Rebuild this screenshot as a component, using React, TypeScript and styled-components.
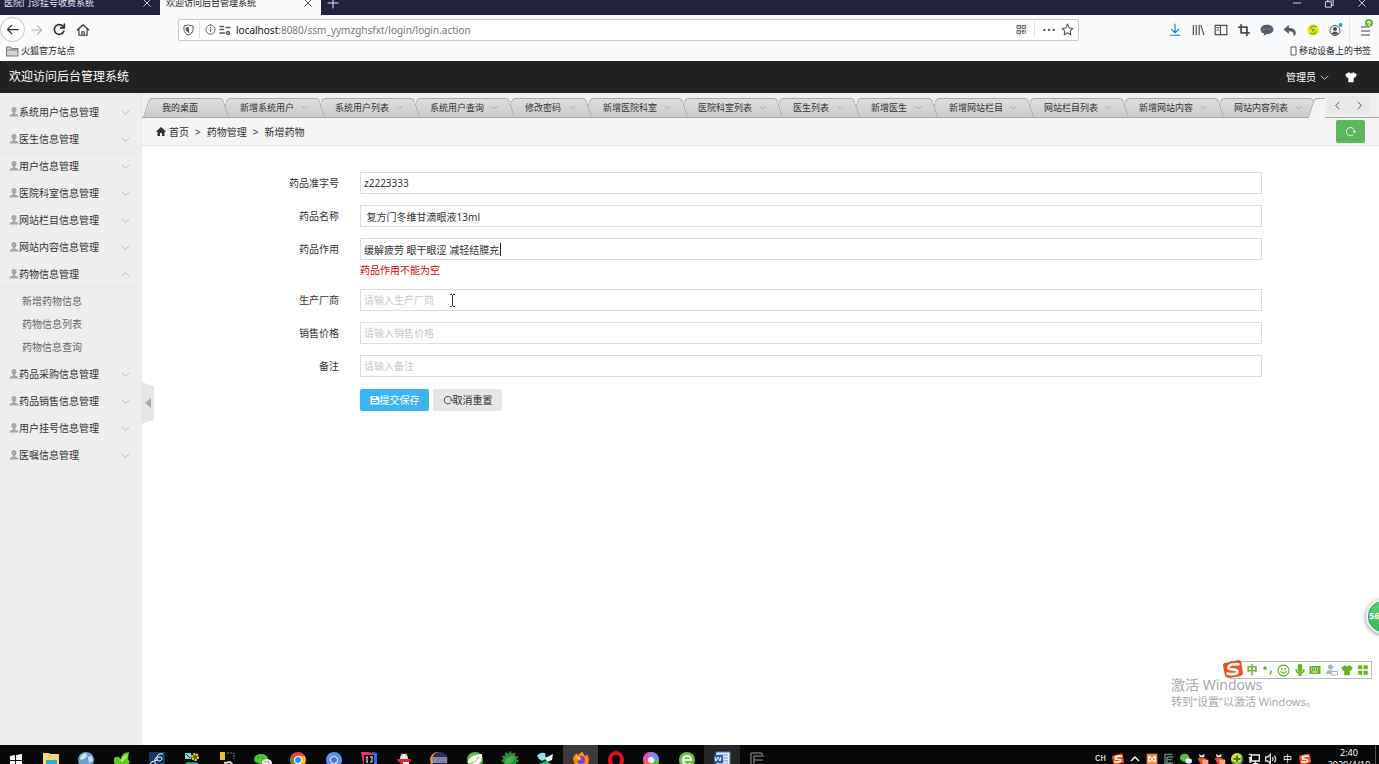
import React from "react";
import styled, { createGlobalStyle } from "styled-components";

const Global = createGlobalStyle`
  * { box-sizing: border-box; }
  html, body { margin: 0; padding: 0; }
  body {
    font-family: "Noto Sans", "Noto Sans CJK SC", sans-serif;
    font-size: 10px;
    line-height: 16px;
    color: #333;
    background: #fff;
    overflow: hidden;
  }
  button, input { font: inherit; color: inherit; margin: 0; }
  button { padding: 0; border: 0; background: none; }
  a { color: inherit; text-decoration: none; }
  ul, ol { list-style: none; margin: 0; padding: 0; }
  svg { display: block; flex: none; }
`;

const Screen = styled.div`
  display: flex;
  flex-direction: column;
  height: 100vh;
  overflow: hidden;
  position: relative;
`;

/* ---------- browser chrome ---------- */

const TitleBar = styled.div`
  display: flex;
  align-items: flex-end;
  height: 15px;
  flex: none;
  overflow: hidden;
  background: #20223f;
`;

const BrowserTab = styled.div<{ $active?: boolean }>`
  display: flex;
  align-items: center;
  justify-content: space-between;
  width: ${(p) => (p.$active ? 161 : 160)}px;
  height: 24px;
  padding: 0 8px 0 ${(p) => (p.$active ? 6 : 4)}px;
  font-size: 9px;
  color: ${(p) => (p.$active ? "#222" : "#e8e8f0")};
  background: ${(p) => (p.$active ? "#f9fafb" : "transparent")};
`;

const TabLabel = styled.span`
  white-space: nowrap;
`;

const GlyphButton = styled.button<{ $color?: string }>`
  display: flex;
  align-items: center;
  justify-content: center;
  color: ${(p) => p.$color || "inherit"};
`;

const NewTab = styled(GlyphButton)`
  width: 24px;
  height: 24px;
  color: #e8e8f0;
`;

const WindowButtons = styled.div`
  display: flex;
  gap: 22px;
  margin-left: auto;
  padding-right: 12px;
  height: 24px;
  align-items: center;
  color: #e8e8f0;
`;

const NavBar = styled.div`
  display: flex;
  align-items: center;
  height: 29px;
  flex: none;
  background: #f9fafb;
`;

const NavGroup = styled.div`
  display: flex;
  align-items: center;
  width: 178px;
  flex: none;
  color: #333;
`;

const BackButton = styled(GlyphButton)`
  width: 25px;
  height: 25px;
  border: 1px solid #c4c4c6;
  border-radius: 50%;
  background: #fff;
`;

const NavButton = styled(GlyphButton)`
  width: 23px;
  height: 24px;
`;

const AddressBar = styled.div`
  display: flex;
  align-items: center;
  gap: 3px;
  flex: 1 1 auto;
  max-width: 901px;
  height: 22px;
  padding: 0 4px 0 4px;
  border: 1px solid #ccc;
  border-radius: 2px;
  background: #fff;
  color: #555;
`;

const AddressText = styled.div`
  flex: 1;
  padding-left: 2px;
  font-size: 10px;
  color: #777;
  white-space: nowrap;
`;

const Host = styled.span`
  color: #111;
`;

const Divider = styled.span`
  width: 1px;
  height: 16px;
  margin: 0 2px;
  background: #e0e0e0;
`;

const AddressActions = styled.div`
  display: flex;
  align-items: center;
  gap: 5px;
`;

const ToolIcons = styled.div`
  display: flex;
  align-items: center;
  gap: 9px;
  margin-left: auto;
  padding-right: 5px;
  color: #4a4a4f;
`;

const AppMenu = styled(GlyphButton)`
  height: 24px;
  margin-left: -3px;
  padding-left: 10px;
  border-left: 1px solid #e4e4e4;
`;

const Bookmarks = styled.div`
  display: flex;
  align-items: center;
  justify-content: space-between;
  height: 17px;
  flex: none;
  padding: 0 8px 3px 6px;
  background: #f9fafb;
  font-size: 9px;
  color: #222;
`;

const Bookmark = styled.a`
  display: flex;
  align-items: center;
  gap: 2px;
`;

/* ---------- application ---------- */

const AppHeader = styled.header`
  display: flex;
  align-items: center;
  justify-content: space-between;
  height: 32px;
  flex: none;
  padding: 0 22px 0 9px;
  background: #222;
  color: #fff;
`;

const AppTitle = styled.h1`
  margin: 0;
  font-size: 12px;
  font-weight: 400;
`;

const HeaderRight = styled.div`
  display: flex;
  align-items: center;
  gap: 16px;
`;

const UserMenu = styled.button`
  display: flex;
  align-items: center;
  gap: 4px;
`;

const Body = styled.div`
  display: flex;
  flex: 1;
  min-height: 0;
`;

const Sidebar = styled.nav`
  position: relative;
  width: 142px;
  flex: none;
  padding-top: 6px;
  background: #eeeeee;
  border-right: 1px solid #e6e6e6;
`;

const MenuButton = styled.button`
  display: flex;
  align-items: center;
  width: 138px;
  height: 27px;
  padding: 0 8px 0 9px;
  border-bottom: 1px solid #e8e8e8;
  text-align: left;
`;

const MenuText = styled.span`
  flex: 1;
  white-space: nowrap;
`;

const SubMenu = styled.ul`
  padding: 2px 0 2px 22px;
`;

const SubItem = styled.li`
  height: 23px;
  line-height: 23px;
  color: #666;
`;

const CollapseHandle = styled.button`
  position: absolute;
  left: 141px;
  top: 289px;
  width: 13px;
  height: 42px;
  display: flex;
  align-items: center;
  justify-content: center;
  background: #e6e6e6;
  color: #aaa;
  clip-path: polygon(0 0, 100% 10%, 100% 90%, 0 100%);
`;

const Main = styled.main`
  display: flex;
  flex-direction: column;
  flex: 1;
  min-width: 0;
  background: #fff;
`;

const TabBar = styled.div`
  display: flex;
  align-items: flex-end;
  height: 25px;
  flex: none;
  background: #efefef;
  border-bottom: 1px solid #a8a8a8;
`;

const TabStrip = styled.ul`
  position: relative;
  display: flex;
  flex: 1;
  min-width: 0;
  height: 20px;
  margin-bottom: -1px;
  overflow: hidden;
  padding-left: 4px;
`;

const PageTab = styled.li<{ $short?: boolean; $active?: boolean; $order: number }>`
  position: relative;
  z-index: ${(p) => p.$order};
  isolation: isolate;
  display: flex;
  align-items: center;
  justify-content: space-between;
  flex: none;
  width: ${(p) => (p.$short ? 78 : 95)}px;
  height: ${(p) => (p.$active ? 20 : 19)}px;
  padding: 0 11px 0 16px;
  font-size: 9px;
  white-space: nowrap;

  &::before,
  &::after {
    content: "";
    position: absolute;
    z-index: -1;
    top: 0;
    bottom: 0;
    border: 1px solid #a8a8a8;
    border-bottom: 0;
    background: ${(p) => (p.$active ? "#f3f3f3" : "linear-gradient(#dedede, #cbcbcb)")};
  }
  &::before {
    left: ${(p) => (p.$active ? -2 : 0)}px;
    right: 50%;
    border-right: 0;
    border-top-left-radius: 4px;
    transform: skewX(-18deg);
  }
  &::after {
    left: 30%;
    right: -2px;
    border-left: 0;
    border-top-right-radius: 4px;
    transform: skewX(18deg);
  }
`;

const TabPager = styled.div`
  display: flex;
  align-items: center;
  flex: none;
  width: 54px;
  height: 24px;
  padding: 0 9px 0 2px;
`;

const PagerButton = styled(GlyphButton)`
  flex: 1;
  height: 18px;
  background: #e8e8e8;
`;

const Crumbs = styled.div`
  display: flex;
  align-items: center;
  justify-content: space-between;
  height: 28px;
  flex: none;
  padding: 0 14px;
  background: #f4f4f4;
  border-bottom: 1px solid #e6e6e6;
`;

const CrumbList = styled.ol`
  display: flex;
  align-items: center;
  gap: 6px;
`;

const Crumb = styled.li`
  display: flex;
  align-items: center;
  gap: 3px;
`;

const RefreshButton = styled(GlyphButton)`
  width: 29px;
  height: 23px;
  border-radius: 2px;
  background: #5cb85c;
  color: #fff;
`;

const Form = styled.form`
  display: flex;
  flex-direction: column;
  gap: 11px;
  padding: 26px 117px 0 0;
`;

const Field = styled.div`
  display: grid;
  grid-template-columns: 197px 1fr;
  column-gap: 21px;
`;

const Label = styled.label`
  line-height: 22px;
  text-align: right;
`;

const TextBox = styled.input`
  width: 100%;
  height: 22px;
  padding: 0 3px;
  border: 1px solid #ddd;
  border-radius: 0;
  outline: none;
  background: #fff;
  &::placeholder { color: #c8c8c8; opacity: 1; }
`;

const ErrorText = styled.p`
  grid-column: 2;
  margin: 2px 0 0;
  color: #e60000;
`;

const Actions = styled.div`
  display: flex;
  gap: 4px;
  padding: 1px 0 0 218px;
`;

const ActionButton = styled.button<{ $primary?: boolean }>`
  display: flex;
  align-items: center;
  justify-content: center;
  width: 69px;
  height: 22px;
  border-radius: 2px;
  background: ${(p) => (p.$primary ? "#3bb4f2" : "#e6e6e6")};
  color: ${(p) => (p.$primary ? "#fff" : "#333")};
`;

/* ---------- desktop overlays ---------- */

const MouseCursor = styled.div`
  position: absolute;
  left: 449px;
  top: 294px;
`;

const TextCaret = styled.div`
  position: absolute;
  left: 500px;
  top: 243px;
  width: 1px;
  height: 13px;
  background: #222;
`;

const Watermark = styled.div`
  position: absolute;
  right: 66px;
  bottom: 54px;
  width: 142px;
  color: #a8a8a8;
  white-space: nowrap;
`;

const WatermarkTitle = styled.div`
  font-size: 14px;
  line-height: 18px;
`;

const WatermarkText = styled.div`
  font-size: 11px;
  line-height: 16px;
`;

const ImeBar = styled.div`
  position: absolute;
  right: 7px;
  bottom: 85px;
  display: flex;
  align-items: center;
  width: 142px;
  height: 18px;
  padding: 0 0 0 13px;
  border: 1px solid #b4b9c4;
  background: #fff;
  color: #6ab023;
`;

const ImeKey = styled(GlyphButton)`
  flex: 1;
  font-size: 11px;
  font-weight: 700;
`;

const ImeLogo = styled.div`
  position: absolute;
  left: -8px;
  top: -3px;
`;

const SpeedBall = styled.div`
  position: absolute;
  right: -22px;
  bottom: 130px;
  width: 35px;
  height: 35px;
  padding-left: 1px;
  border: 2px solid #e9eef0;
  border-radius: 50%;
  background: linear-gradient(#5fd37c, #35b957);
  box-shadow: 0 1px 4px rgba(0, 0, 0, 0.5), inset 0 0 0 1px #3f9a5a;
  color: #fff;
  font-size: 9px;
  font-weight: 700;
  line-height: 29px;
`;

const Taskbar = styled.footer`
  display: flex;
  height: 19px;
  flex: none;
  overflow: hidden;
  background: #070808;
  color: #fff;
`;

const TaskList = styled.div`
  display: grid;
  grid-auto-flow: column;
  grid-auto-columns: 1fr;
  flex: 0 1 777px;
  margin-left: -2px;
`;

const TaskButton = styled.button<{ $open?: "front" | "back" }>`
  display: flex;
  justify-content: center;
  height: 30px;
  padding-top: 6px;
  background: ${(p) => (p.$open === "front" ? "#3a3a3c" : p.$open === "back" ? "#232527" : "transparent")};
`;

const Tray = styled.div`
  display: flex;
  align-items: flex-start;
  margin-left: auto;
  font-size: 9px;
  line-height: 12px;
`;

const TrayItem = styled(GlyphButton)`
  width: 17px;
  height: 12px;
  margin-top: 8px;
`;

const InputLocale = styled(TrayItem)`
  font-family: "Liberation Mono", monospace;
`;

const Clock = styled.div`
  width: 52px;
  margin: 2px 0 0 10px;
  text-align: center;
`;

const ShowDesktop = styled.div`
  width: 4px;
  height: 24px;
  border-left: 1px solid #555;
`;

/* ---------- icons ---------- */

type StrokeProps = { size?: number; d: string; w?: number; color?: string; fill?: string };
const Stroke = ({ size = 12, d, w = 2, color = "currentColor", fill = "none" }: StrokeProps) => (
  <svg width={size} height={size} viewBox="0 0 24 24" fill={fill} stroke={color} strokeWidth={w} strokeLinecap="round" strokeLinejoin="round" aria-hidden="true">
    <path d={d} />
  </svg>
);

const CROSS = "M4 4 20 20M20 4 4 20";
const DOWN = "M3 8 12 17 21 8";
const UP = "M3 16 12 7 21 16";
const SHIRT = "M8 3 1 7l3 6 3-1v10h10V12l3 1 3-6-7-4c-1 3-7 3-8 0z";

const PersonIcon = () => (
  <svg width="10" height="10" viewBox="0 0 20 20" fill="#a3a8ac" aria-hidden="true">
    <path d="M10 0c-4 0-5 2-5 5 0 3 1 5 3 6v2L3 15c-1 1-2 2-2 4h18c0-2-1-3-2-4l-5-2v-2c2-1 3-3 3-6 0-3-1-5-5-5z" />
  </svg>
);

const RotateIcon = ({ size = 11 }: { size?: number }) => (
  <svg width={size} height={size} viewBox="0 0 24 24" fill="none" stroke="currentColor" strokeWidth="2" aria-hidden="true">
    <path d="M18 19A9 9 0 1 1 21 12M17 11l4 4 3-4" />
  </svg>
);

const SogouLogo = ({ size }: { size: number }) => (
  <svg width={size} height={size} viewBox="0 0 22 22" aria-hidden="true">
    <path d="M3 4 17 1q2 0 3 2l2 13q0 2-3 3L6 21q-3 0-4-3L0 7q0-3 3-3z" fill="#f0501e" />
    <path d="M17 6Q7 5 6 9c-1 4 10 1 10 5 0 3-6 3-11 2" fill="none" stroke="#fff" strokeWidth="3" strokeLinecap="round" />
  </svg>
);

const Art = ({ size = 18, children }: { size?: number; children: React.ReactNode }) => (
  <svg width={size} height={size} viewBox="0 0 18 18" aria-hidden="true">{children}</svg>
);

const penguin = (
  <>
    <path d="M3 1l4 3 4-3v5H4z" fill="#f3eee0" />
    <path d="M1 8q8-4 13 1l-2 7H5z" fill="#e2512f" />
    <path d="M8 10h9v7H8z" fill="#f4a489" />
  </>
);

/* ---------- data ---------- */

const menuBefore = ["系统用户信息管理", "医生信息管理", "用户信息管理", "医院科室信息管理", "网站栏目信息管理", "网站内容信息管理"];
const subMenu = ["新增药物信息", "药物信息列表", "药物信息查询"];
const menuAfter = ["药品采购信息管理", "药品销售信息管理", "用户挂号信息管理", "医嘱信息管理"];
const pageTabs = ["我的桌面", "新增系统用户", "系统用户列表", "系统用户查询", "修改密码", "新增医院科室", "医院科室列表", "医生列表", "新增医生", "新增网站栏目", "网站栏目列表", "新增网站内容", "网站内容列表"];

const fields: { id: string; label: string; value?: string; hint?: string; error?: string }[] = [
  { id: "code", label: "药品准字号", value: "z2223333" },
  { id: "name", label: "药品名称", value: " 复方门冬维甘滴眼液13ml" },
  { id: "effect", label: "药品作用", value: "缓解疲劳 眼干眼涩 减轻结膜充", error: "药品作用不能为空" },
  { id: "maker", label: "生产厂商", hint: "请输入生产厂商" },
  { id: "price", label: "销售价格", hint: "请输入销售价格" },
  { id: "remark", label: "备注", hint: "请输入备注" },
];

const MenuRow = ({ text, open }: { text: string; open?: boolean }) => (
  <MenuButton type="button" aria-expanded={!!open}>
    <PersonIcon />
    <MenuText>{text}</MenuText>
    <Stroke size={9} d={open ? UP : DOWN} color="#aaa" />
  </MenuButton>
);

const tasks: { name: string; open?: "front" | "back"; art: React.ReactNode }[] = [
  { name: "开始", art: <path d="M3 5l5-1v5H3zM9 4l6-1v6H9zM3 10h5v5l-5-1zM9 10h6v6l-6-1z" fill="#fff" /> },
  { name: "文件", art: <><path d="M1 2h6l1 1h9v14H1z" fill="#f7d774" /><path d="M4 9h11v8h-3v-4H7v4H4z" fill="#35a7e0" /></> },
  { name: "浏览", art: <><circle cx="9" cy="9" r="8" fill="#6a9fd8" /><path d="M3 7q2-5 6-5l1 3-3 3-3 1zM11 6l4-1 1 5-4 2z" fill="#cfe3f6" /></> },
  { name: "下载", art: <><path d="M1 7q4-3 7 1 0-6 8-7l-1 7 2 3q-5 7-12 4L1 12z" fill="#5fce1f" /><path d="M8 9q3-5 7-6-2 6-7 8z" fill="#b5f06a" /></> },
  { name: "数据", art: <><path d="M1 1h16v17H1z" fill="#143b63" /><path d="M15 3q-5-1-6 3t3 4q5-4-1-4-5 0-4 5t-5 3q0-4 8-5" fill="none" stroke="#fff" /></> },
  { name: "主机", art: <><path d="M2 2h6v6H2z" fill="#7fd7e8" /><path d="M3 3l4 4" stroke="#222" /><circle cx="12" cy="6" r="3" fill="#6a5c12" stroke="#f5d73a" strokeWidth="2" strokeDasharray="2 1" /><path d="M4 11h10l3 3v4H1v-4z" fill="#0d9b58" /></> },
  { name: "工具", art: <><path d="M1 1h5v8H1z" fill="#f1b92b" /><path d="M8 2h7v6" fill="none" stroke="#8a8046" strokeDasharray="2 1" /><path d="M5 12l6-1 6 6" fill="none" stroke="#ddd" strokeWidth="2" /></> },
  { name: "微信", art: <><ellipse cx="7" cy="8" rx="7" ry="5" fill="#54c440" /><ellipse cx="13" cy="12" rx="5" ry="4" fill="#eee" /><path d="M4 7h1M8 7h1M11 11h1M14 11h1" stroke="#333" /></> },
  { name: "谷歌", art: <><circle cx="9" cy="9" r="8" fill="#e5483b" /><path d="M2 5l6 12Q-1 15 2 5z" fill="#2ba24c" /><path d="M9 5h7q3 9-7 12z" fill="#fbc116" /><circle cx="9" cy="9" r="4" fill="#fff" /><circle cx="9" cy="9" r="3" fill="#4285f4" /></> },
  { name: "内核", art: <><circle cx="9" cy="9" r="8" fill="#5f92ea" /><circle cx="9" cy="9" r="4" fill="#dbe7fb" /><circle cx="9" cy="9" r="3" fill="#4778d6" /></> },
  { name: "开发", art: <><path d="M1 1h8l8 3v14H4z" fill="#ef3364" /><path d="M12 1l5 1v16h-6z" fill="#2d6ff0" /><path d="M4 4h10v12H4z" fill="#000" /><path d="M6 6h2M7 6v5M6 11h2M10 6h3M12 6v5h-2" stroke="#fff" fill="none" /></> },
  { name: "终端", art: <><path d="M6 3h6l1 5H5z" fill="#eee" /><path d="M7 2v3M11 2v3" stroke="#a07a33" /><path d="M2 8h14l-1 3H8v4H5v-4H3z" fill="#e32626" /><path d="M8 11h6v6H8z" fill="#eee" /></> },
  { name: "集成", art: <><circle cx="8" cy="9" r="8" fill="#f29423" /><circle cx="10" cy="9" r="8" fill="#2e2a5b" /><path d="M2 7h15M2 9h15M2 11h15" stroke="#dcdcf0" /></> },
  { name: "叶一", art: <><circle cx="9" cy="9" r="8" fill="#68b643" /><path d="M2 12Q2 4 16 3q0 12-8 11-3 0-6-2z" fill="#fff" /><path d="M3 13q6-1 10-7" stroke="#68b643" fill="none" /></> },
  { name: "叶二", art: <><circle cx="9" cy="9" r="7" fill="#2d8b3e" stroke="#2d8b3e" strokeWidth="3" strokeDasharray="2 2" /><path d="M4 12q0-7 10-7-1 8-8 8z" fill="#4da64c" /></> },
  { name: "网络", art: <><path d="M1 5q3-4 8-3l1 6-4 2q-3-1-5-5z" fill="#8fe3f0" /><path d="M9 7l8-4-1 6-5 2z" fill="#e3f8fa" /><path d="M3 13l6-3 7 3-2 5H4z" fill="#1fb573" /></> },
  { name: "火狐", open: "front", art: <><path d="M1 8q1-4 4-6l1 3q2-4 5-4 0 3 3 4l1-2q3 5 1 10t-7 5-8-10z" fill="#ff8a1f" /><circle cx="9" cy="9" r="4" fill="#7542c8" /><path d="M4 5q5 0 5 3l-3 2z" fill="#ffc928" /></> },
  { name: "欧朋", art: <ellipse cx="9" cy="9" rx="6" ry="7" fill="none" stroke="#d81522" strokeWidth="4" /> },
  { name: "相册", art: <><circle cx="9" cy="9" r="8" fill="#ff5c58" /><path d="M9 9H1a8 8 0 0 1 8-8z" fill="#e056c8" /><path d="M9 9V1a8 8 0 0 1 8 8z" fill="#6d8cf5" /><path d="M9 9h8a8 8 0 0 1-8 8z" fill="#58c94b" /><circle cx="9" cy="9" r="3" fill="#fff" /></> },
  { name: "安全", art: <><circle cx="9" cy="9" r="8" fill="#67c43c" /><path d="M5 9h8q0-4-4-4t-4 4 4 5l4-1" stroke="#fff" strokeWidth="2" fill="none" /></> },
  { name: "文档", open: "back", art: <><path d="M3 1h14v16H3z" fill="#e5eefb" stroke="#4475bd" /><path d="M6 4h9M6 7h9M6 10h9M6 13h9" stroke="#6a96d3" /><path d="M1 4h9v8H1z" fill="#2a5cab" /><path d="M2 6l1 4 2-4 2 4 1-4" stroke="#fff" fill="none" /></> },
  { name: "录制", art: <path d="M14 2H3v14h5M6 5h10M6 9h9M6 5v9h7M14 2v2" stroke="#999" fill="none" /> },
];

const tray: { name: string; art: React.ReactNode }[] = [
  { name: "展开", art: <path d="M3 12l6-6 6 6" fill="none" stroke="#fff" strokeWidth="2" /> },
  { name: "控制", art: <><path d="M1 1h16v16H1z" fill="#f08436" /><path d="M4 5q3 0 5 4 2 4 5 4V5q-3 0-5 4-2 4-5 4z" fill="none" stroke="#fff" strokeWidth="2" /></> },
  { name: "录屏", art: <path d="M14 2H3v14h4M6 6h9M6 10h8M6 6v9h9" stroke="#6e8f7b" strokeWidth="2" fill="none" /> },
  { name: "微信消息", art: <><ellipse cx="7" cy="7" rx="7" ry="6" fill="#54c440" /><ellipse cx="13" cy="12" rx="5" ry="4" fill="#eee" /></> },
  { name: "消息一", art: penguin },
  { name: "消息二", art: penguin },
  { name: "防护", art: <><circle cx="9" cy="9" r="9" fill="#e8d82a" /><path d="M2 13a8 8 0 0 0 14-8" fill="none" stroke="#3f9b37" strokeWidth="3" /><path d="M9 4v10M4 9h10" stroke="#2e7d32" strokeWidth="3" /></> },
  { name: "联网", art: <path d="M5 3h12v9H5zM11 12v4M8 16h7M1 2h4M1 7h3M3 7v8" fill="none" stroke="#eee" strokeWidth="2" /> },
  { name: "音量", art: <path d="M1 6h3l4-4v14l-4-4H1zM11 6q2 3 0 6M14 4q4 5 0 10" fill="none" stroke="#ddd" strokeWidth="2" /> },
];

const GRID_APPS = "M3 3h7v7H3zM14 3h7v7h-7zM3 14h7v7H3zM14 14h7v7h-7z";

export default function App() {
  return (
    <Screen>
      <Global />
      <TitleBar>
        <BrowserTab>
          <TabLabel>医院门诊挂号收费系统</TabLabel>
          <GlyphButton aria-label="关闭标签"><Stroke size={10} d={CROSS} /></GlyphButton>
        </BrowserTab>
        <BrowserTab $active>
          <TabLabel>欢迎访问后台管理系统</TabLabel>
          <GlyphButton aria-label="关闭标签"><Stroke size={10} d={CROSS} /></GlyphButton>
        </BrowserTab>
        <NewTab aria-label="新标签"><Stroke size={12} d="M12 2v20M2 12h20" /></NewTab>
        <WindowButtons>
          <GlyphButton aria-label="最小化"><Stroke size={10} d="M3 12h18" /></GlyphButton>
          <GlyphButton aria-label="还原"><Stroke size={11} d="M4 8h12v12H4zM8 8V4h12v12h-4" /></GlyphButton>
          <GlyphButton aria-label="关闭"><Stroke size={10} d={CROSS} /></GlyphButton>
        </WindowButtons>
      </TitleBar>

      <NavBar>
        <NavGroup>
          <BackButton aria-label="后退"><Stroke size={15} d="M21 12H4M11 5l-7 7 7 7" /></BackButton>
          <NavButton aria-label="前进" $color="#b5b5b8"><Stroke size={14} d="M3 12h17M13 5l7 7-7 7" /></NavButton>
          <NavButton aria-label="刷新"><Stroke size={13} d="M20 15a9 9 0 1 1-1-8M21 2v7h-7" w={3} /></NavButton>
          <NavButton aria-label="主页"><Stroke size={14} d="M2 12 12 3l10 9M5 11v10h14V11M10 21v-6h4v6" /></NavButton>
        </NavGroup>
        <AddressBar>
          <svg width="11" height="12" viewBox="0 0 22 24" fill="none" stroke="currentColor" strokeWidth="2" aria-hidden="true">
            <path d="M11 2 20 4v7c0 6-4 9-9 11-5-2-9-5-9-11V4z" /><path d="M11 7v10c-3-2-5-4-5-9z" fill="currentColor" />
          </svg>
          <Divider />
          <Stroke size={11} d="M12 2a10 10 0 1 0 .1 0zM12 11v6M12 7v.5" />
          <Stroke size={12} w={3} d="M2 5h7M2 11h7M14 7h8M2 18h9M18 15a3 3 0 1 0 .1 0" />
          <AddressText><Host>localhost</Host>:8080/ssm_yymzghsfxt/login/login.action</AddressText>
          <AddressActions>
            <Stroke size={11} d="M3 3h7v7H3zM14 3h7v7h-7zM3 14h7v7H3zM14 14h3v3h-3zM20 14v3M14 20h3M20 20h1M6 6h1M17 6h1M6 17h1" />
            <Divider />
            <Stroke size={14} w={4} d="M4 12h.1M12 12h.1M20 12h.1" />
            <Stroke size={13} d="M12 2l3 7 7 1-5 5 1 7-6-4-6 4 1-7-5-5 7-1z" />
          </AddressActions>
        </AddressBar>
        <ToolIcons>
          <Stroke size={14} d="M12 2v14M6 11l6 6 6-6M4 21h16" color="#0a7be8" />
          <Stroke size={14} d="M4 4v16M9 4v16M14 4v16M17 4l5 16" />
          <Stroke size={14} d="M2 4h20v16H2zM11 4v16M5 8h3M5 12h3" />
          <Stroke size={14} w={3} d="M7 3v14h14M3 7h14v14" />
          <svg width="14" height="14" viewBox="0 0 24 24" fill="#56606a" aria-hidden="true"><path d="M12 3c6 0 11 3 11 8s-5 8-11 8l-6 3 1-4c-4-1-6-4-6-7 0-5 5-8 11-8z" /><path d="M7 11h.1M12 11h.1M17 11h.1" stroke="#aab" strokeWidth="2" strokeLinecap="round" /></svg>
          <svg width="14" height="14" viewBox="0 0 24 24" fill="#56606a" aria-hidden="true"><path d="M10 3v5c8 0 12 5 12 9 0 3-2 5-4 5 1-6-2-8-8-8v5l-9-8z" /></svg>
          <svg width="14" height="14" viewBox="0 0 24 24" aria-hidden="true"><circle cx="12" cy="12" r="10" fill="#f2e713" /><path d="M7 10a6 6 0 0 1 10-3M18 14a6 6 0 0 1-10 3M12 9v7M9 12h7" fill="none" stroke="#5ba338" strokeWidth="2" /></svg>
          <svg width="14" height="16" viewBox="0 0 28 32" aria-hidden="true"><circle cx="12" cy="17" r="10" fill="none" stroke="#4a4a4f" strokeWidth="2" /><circle cx="12" cy="14" r="4" fill="#4a4a4f" /><path d="M5 23q7-8 14 0-7 5-14 0z" fill="#4a4a4f" /><circle cx="23" cy="6" r="4" fill="#16a5f2" /></svg>
          <AppMenu aria-label="菜单">
            <svg width="14" height="24" viewBox="0 0 14 24" aria-hidden="true"><path d="M1 9h8M1 13h9M1 17h9" stroke="#444" strokeWidth="1" /><circle cx="9" cy="5" r="4" fill="#62b82f" /><path d="M9 8V3M7 5l2-2 2 2" stroke="#fff" fill="none" /></svg>
          </AppMenu>
        </ToolIcons>
      </NavBar>

      <Bookmarks>
        <Bookmark href="#official">
          <svg width="13" height="11" viewBox="0 0 26 22" aria-hidden="true"><path d="M1 2h8l2 3h13v15H1zM1 8h23" fill="#d4d4d4" stroke="#777" strokeWidth="2" /></svg>
          火狐官方站点
        </Bookmark>
        <Bookmark href="#mobile">
          <svg width="7" height="10" viewBox="0 0 7 10" aria-hidden="true"><path d="M1 1h5v8H1z" fill="#fff" stroke="#555" /></svg>
          移动设备上的书签
        </Bookmark>
      </Bookmarks>

      <AppHeader>
        <AppTitle>欢迎访问后台管理系统</AppTitle>
        <HeaderRight>
          <UserMenu type="button">管理员<Stroke size={9} d={DOWN} /></UserMenu>
          <GlyphButton aria-label="换肤"><Stroke size={12} d={SHIRT} fill="currentColor" w={1} /></GlyphButton>
        </HeaderRight>
      </AppHeader>

      <Body>
        <Sidebar>
          {menuBefore.map((t) => <MenuRow key={t} text={t} />)}
          <MenuRow text="药物信息管理" open />
          <SubMenu>
            {subMenu.map((t) => <SubItem key={t}><a href="#drug">{t}</a></SubItem>)}
          </SubMenu>
          {menuAfter.map((t) => <MenuRow key={t} text={t} />)}
          <CollapseHandle aria-label="收起菜单">
            <svg width="6" height="10" viewBox="0 0 6 10" fill="currentColor" aria-hidden="true"><path d="M6 0v10L0 5z" /></svg>
          </CollapseHandle>
        </Sidebar>

        <Main>
          <TabBar>
            <TabStrip>
              {pageTabs.map((t, i) => (
                <PageTab key={t} $short={t.length === 4} $order={20 - i}>
                  {t}
                  {i > 0 && <GlyphButton $color="#a4a4a4" aria-label="关闭"><Stroke size={7} d={DOWN} w={3} /></GlyphButton>}
                </PageTab>
              ))}
              <PageTab $active $order={30} />
            </TabStrip>
            <TabPager>
              <PagerButton aria-label="向左"><Stroke size={9} d="M16 3 7 12l9 9" /></PagerButton>
              <PagerButton aria-label="向右"><Stroke size={9} d="M8 3l9 9-9 9" /></PagerButton>
            </TabPager>
          </TabBar>
          <Crumbs>
            <CrumbList>
              <Crumb>
                <svg width="10" height="9" viewBox="0 0 20 18" fill="#333" aria-hidden="true"><path d="M10 0l10 9-2 1-1-1v9h-5v-6H8v6H3V9l-1 1-2-1z" /></svg>
                <a href="#home">首页</a>
              </Crumb>
              <li>&gt;</li>
              <li>药物管理</li>
              <li>&gt;</li>
              <li>新增药物</li>
            </CrumbList>
            <RefreshButton aria-label="刷新页面"><RotateIcon /></RefreshButton>
          </Crumbs>
          <Form onSubmit={(e) => e.preventDefault()}>
            {fields.map((f) => (
              <Field key={f.id}>
                <Label htmlFor={f.id}>{f.label}</Label>
                <TextBox id={f.id} type="text" defaultValue={f.value} placeholder={f.hint} />
                {f.error && <ErrorText>{f.error}</ErrorText>}
              </Field>
            ))}
            <Actions>
              <ActionButton $primary type="submit">
                <svg width="10" height="10" viewBox="0 0 20 20" aria-hidden="true"><path d="M1 2h14l4 4v13H1z" fill="#fff" /><path d="M5 4h7v3H5zM4 10h12v6H4z" fill="#3bb4f2" /><path d="M5 13h8" stroke="#fff" strokeWidth="2" /></svg>
                提交保存
              </ActionButton>
              <ActionButton type="reset"><RotateIcon size={10} />取消重置</ActionButton>
            </Actions>
          </Form>
        </Main>
      </Body>

      <Taskbar>
        <TaskList>
          {tasks.map((t) => (
            <TaskButton key={t.name} $open={t.open} aria-label={t.name}><Art>{t.art}</Art></TaskButton>
          ))}
        </TaskList>
        <Tray>
          <InputLocale>CH</InputLocale>
          <TrayItem aria-label="搜狗"><SogouLogo size={12} /></TrayItem>
          {tray.map((t) => (
            <TrayItem key={t.name} aria-label={t.name}><Art size={12}>{t.art}</Art></TrayItem>
          ))}
          <TrayItem>中</TrayItem>
          <TrayItem aria-label="输入法"><SogouLogo size={12} /></TrayItem>
          <Clock>2:40<br />2020/4/19</Clock>
          <ShowDesktop />
        </Tray>
      </Taskbar>

      <TextCaret />
      <MouseCursor>
        <svg width="7" height="13" viewBox="0 0 7 13" stroke="#333" fill="none" aria-hidden="true"><path d="M1 .5h2M4 .5h2M3.500 1v11M1 12.500h2M4 12.500h2" /></svg>
      </MouseCursor>
      <Watermark>
        <WatermarkTitle>激活 Windows</WatermarkTitle>
        <WatermarkText>转到“设置”以激活 Windows。</WatermarkText>
      </Watermark>
      <ImeBar>
        <ImeLogo><SogouLogo size={20} /></ImeLogo>
        <ImeKey>中</ImeKey>
        <ImeKey aria-label="标点"><Stroke size={12} w={3} d="M6 6a2 2 0 1 0 .1 0M18 14v2q0 3-2 4" /></ImeKey>
        <ImeKey aria-label="表情"><Stroke size={13} d="M12 2a10 10 0 1 0 .1 0zM9 8v3M15 8v3M7 14q5 5 10 0" /></ImeKey>
        <ImeKey aria-label="语音">
          <svg width="12" height="12" viewBox="0 0 24 24" fill="none" stroke="currentColor" strokeWidth="3" aria-hidden="true"><path d="M9 2h6v12H9z" fill="currentColor" strokeLinejoin="round" /><path d="M4 10q0 8 8 8t8-8M12 18v4M8 22h8" /></svg>
        </ImeKey>
        <ImeKey aria-label="键盘">
          <svg width="12" height="10" viewBox="0 0 24 20" aria-hidden="true"><path d="M1 2h22v16H1z" fill="currentColor" /><path d="M4 6h16M4 10h16" stroke="#fff" strokeWidth="2" strokeDasharray="2 2" /><path d="M7 14h10" stroke="#fff" strokeWidth="2" /></svg>
        </ImeKey>
        <ImeKey aria-label="账户" $color="#a9b5c6">
          <svg width="13" height="12" viewBox="0 0 26 24" fill="currentColor" aria-hidden="true"><circle cx="11" cy="6" r="5" /><path d="M2 20q0-8 9-8 4 0 6 2h-5v6z" /><path d="M13 15h12v7H13z" fill="none" stroke="currentColor" strokeWidth="2" /></svg>
        </ImeKey>
        <ImeKey aria-label="皮肤"><Stroke size={12} d={SHIRT} fill="currentColor" w={1} /></ImeKey>
        <ImeKey aria-label="工具箱"><Stroke size={12} d={GRID_APPS} fill="currentColor" w={1} /></ImeKey>
      </ImeBar>
      <SpeedBall>56</SpeedBall>
    </Screen>
  );
}
